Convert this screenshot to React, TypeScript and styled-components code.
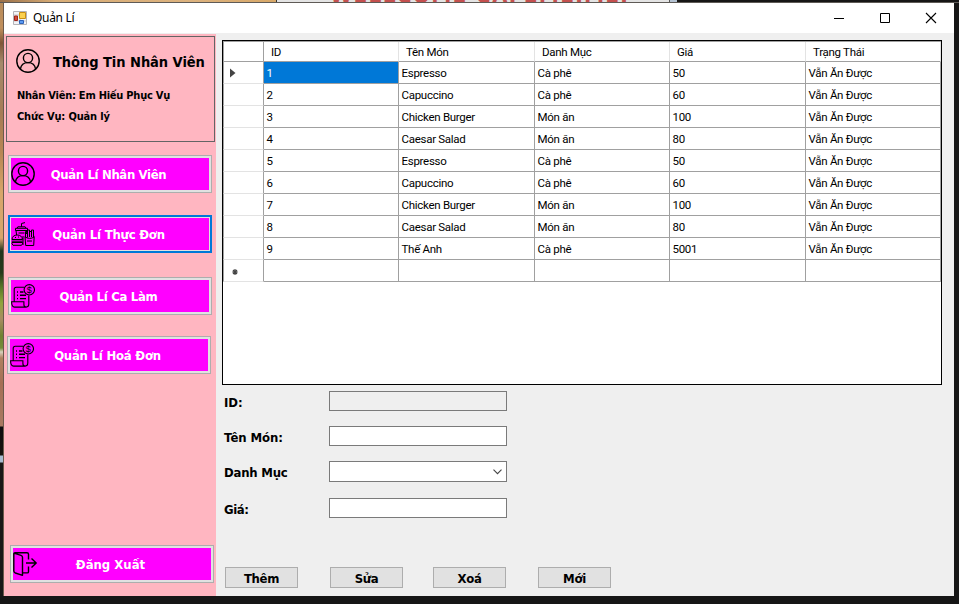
import React from 'react';
import styled, { createGlobalStyle } from 'styled-components';

const GlobalStyle = createGlobalStyle`
  *, *::before, *::after { box-sizing: border-box; }
  body { margin: 0; background: #161616; }
  button, input { font: inherit; color: inherit; margin: 0; border-radius: 0; outline: none; }
`;

const Desktop = styled.div`
  display: grid;
  grid-template: 3px 593px 8px / 4px 950px 5px;
  width: 959px;
  height: 604px;
  overflow: hidden;
  background: #161616;
  font-family: 'DejaVu Sans Condensed', 'DejaVu Sans', sans-serif;
  color: #000;
`;

const TopStrip = styled.div`
  grid-column: 1 / -1;
  display: flex;
  overflow: hidden;
  border-bottom: 1px solid #5e5a56;
`;

const Wallpaper = styled.div`
  width: 276px;
  background: linear-gradient(90deg, #9a7048, #d9ae78 20%, #dcb27e 70%, #d8a868);
`;

const BackWindow = styled.div`
  width: 393px;
  height: 3px;
  padding-left: 53px;
  border-left: 1px solid #333;
  overflow: hidden;
  background: #e4e4e4;
`;

const Welcome = styled.div`
  margin-top: -17px;
  font: bold 22.5px/24px 'DejaVu Sans Condensed', 'DejaVu Sans', sans-serif;
  letter-spacing: 1.2px;
  white-space: nowrap;
  color: #c4504e;
`;

const BackEdge = styled.div`
  width: 8px;
  border-left: 1px solid #555;
  background: #b4c2d2;
`;

const LeftStrip = styled.div`
  border-right: 1px solid #6b5a4c;
  background: linear-gradient(
    180deg,
    #b98c5b 0, #c08f5c 25px, #7f5638 40px, #a58a6b 60px, #a67c56 110px, #b98653 150px,
    #d8a66a 190px, #d9a56b 235px, #22341c 248px, #263b1c 270px, #5b7a28 285px, #90a43c 300px,
    #a98b62 316px, #6f8230 333px, #768c39 345px, #d8d0bd 349px, #b08060 355px, #a56f55 380px,
    #a87a62 423px, #0d0d0f 424px, #17130f 452px, #a8bcd0 453px, #a8bcd0 459px, #181818 460px
  );
`;

const Window = styled.main`
  display: grid;
  grid-template: 30px 563px / 212px 738px;
  background: #efefef;
`;

const TitleBar = styled.header`
  grid-column: 1 / -1;
  display: flex;
  align-items: center;
  padding-left: 9px;
  background: #fff;
`;

const WindowTitle = styled.h1`
  flex: 1;
  margin: 0 0 0 6px;
  font: 400 12px/20px 'Noto Sans', sans-serif;
  letter-spacing: -0.3px;
`;

const CaptionButton = styled.button`
  display: grid;
  place-items: center;
  width: 46px;
  height: 29px;
  padding: 0;
  border: 0;
  background: none;
`;

const Sidebar = styled.aside`
  display: flex;
  flex-direction: column;
  align-items: flex-start;
  height: 562px;
  margin-top: 1px;
  padding: 2px 0 13px 2px;
  background: #ffb6c1;
`;

const Profile = styled.section`
  width: 209px;
  height: 106px;
  padding: 12px 0 0 9px;
  border: 1px solid #646464;
`;

const ProfileHead = styled.div`
  display: flex;
  align-items: center;
  height: 24px;
  margin-bottom: 12px;
`;

const ProfileTitle = styled.h2`
  margin: 1px 0 0 13px;
  font-size: 14.5px;
  line-height: 24px;
  letter-spacing: -0.05px;
  white-space: nowrap;
`;

const ProfileLine = styled.div<{ $track: number }>`
  padding-left: 1px;
  font-size: 11px;
  font-weight: bold;
  line-height: 21px;
  letter-spacing: ${p => p.$track}px;
  white-space: nowrap;
`;

const MenuButton = styled.button<{ $top: number; $left: number; $focused?: boolean }>`
  flex: none;
  display: grid;
  grid-template-columns: 24px 1fr 27px;
  align-items: center;
  width: 204px;
  height: 38px;
  margin: ${p => p.$top}px 0 0 ${p => p.$left}px;
  padding: ${p => (p.$focused ? 1 : 2)}px;
  border: ${p => (p.$focused ? '2px solid #0078d7' : '1px solid #adadad')};
  background: linear-gradient(#f0f, #f0f) content-box, #e1e1e1;
`;

const MenuText = styled.span<{ $track: number }>`
  padding-top: 2px;
  font-size: 13px;
  font-weight: bold;
  line-height: 20px;
  letter-spacing: ${p => p.$track}px;
  text-align: center;
  white-space: nowrap;
  color: #fff;
`;

const Spacer = styled.div`
  flex: 1;
`;

const Content = styled.section`
  padding: 7px 0 0 6px;
`;

const DataGrid = styled.div`
  width: 720px;
  height: 345px;
  border: 1px solid #000;
  background: #fff;
  font: 11.5px Roboto, sans-serif;
  letter-spacing: -0.28px;
`;

const GridRow = styled.div<{ $header?: boolean }>`
  display: grid;
  grid-template-columns: 41px 135px 136px 135px 136px 135px;
  grid-template-rows: 100%;
  height: ${p => (p.$header ? 21 : 22)}px;
  border-top: ${p => (p.$header ? '1px solid #a0a0a0' : '0')};
`;

const RowHeader = styled.div<{ $header?: boolean }>`
  display: flex;
  align-items: center;
  padding-left: 6px;
  border: solid #a0a0a0;
  border-width: 0 1px 1px;
  border-bottom-color: ${p => (p.$header ? '#a0a0a0' : '#e3e3e3')};
`;

const HeaderCell = styled.div`
  padding-left: 7px;
  border-right: 1px solid #e3e3e3;
  border-bottom: 1px solid #a0a0a0;
  line-height: 20px;
`;

const Cell = styled.div<{ $selected?: boolean }>`
  padding-left: 2.5px;
  border-right: 1px solid #a0a0a0;
  border-bottom: 1px solid #a0a0a0;
  line-height: 22px;
  background: ${p => (p.$selected ? '#0078d7' : '#fff')};
  color: ${p => (p.$selected ? '#fff' : '#000')};
`;

const Form = styled.form`
  padding: 6px 0 0 2px;
`;

const Field = styled.label<{ $gap: number }>`
  display: grid;
  grid-template-columns: 105px 178px;
  margin-bottom: ${p => p.$gap}px;
`;

const FieldLabel = styled.span<{ $track?: number }>`
  height: 20px;
  padding-top: 2px;
  font-size: 13px;
  font-weight: bold;
  line-height: 20px;
  letter-spacing: ${p => p.$track ?? 0}px;
`;

const TextBox = styled.input`
  width: 178px;
  height: 20px;
  padding: 0 4px;
  border: 1px solid #7a7a7a;
  background: #fff;
  &:disabled { background: #efefef; }
`;

const ComboBox = styled.span`
  display: flex;
  justify-content: flex-end;
  align-items: center;
  height: 21px;
  padding-right: 4px;
  border: 1px solid #7a7a7a;
  background: #fff;
`;

const Actions = styled.div`
  display: grid;
  grid-template-columns: 105px 103px 105px 73px;
  padding: 49px 0 0 1px;
`;

const ActionButton = styled.button`
  width: 73px;
  height: 21px;
  padding: 2px 0 0;
  border: 1px solid #adadad;
  background: #e1e1e1;
  font-size: 13px;
  font-weight: bold;
  line-height: 17px;
  letter-spacing: -0.3px;
  text-align: center;
`;

const Icon = styled.svg`
  display: block;
  flex: none;
  fill: none;
  stroke: #000;
`;

const UserIcon = () => (
  <Icon width="24" height="24" viewBox="0 0 24 24" strokeWidth="1.4">
    <circle cx="12" cy="12" r="11.2" />
    <circle cx="12" cy="9" r="4.6" />
    <path d="M4.400 20.200C5 15.800 8 13.600 12 13.600s7 2.200 7.600 6.600" />
  </Icon>
);

const FoodIcon = () => (
  <Icon width="24" height="24" viewBox="0 0 24 24" strokeWidth="1">
    <path d="M4.500 8.500V6.300h12v2.200M6 6.300l.8-1.500h7.400l.8 1.500M10.500 4.800V1.500L14 .6M4.500 8.500h12M5 8.500l.6 4.500M16 8.500l-.6 3.500M7.500 11h6" />
    <path d="M1 17.500c0-3 2.300-4.500 5.200-4.500s5.200 1.500 5.200 4.500zM.8 19.200h10.800M1 20.500h10.500v1.300l-1 1.500H2l-1-1.500zM4 15.500h1M7 15h1" />
    <path d="M14.500 15.500v-6h2v6M16.500 15V8h2v7M18.500 15V9.500h2V15M20.500 15V8h2v7.500M14 14.500l.7 9h8l.5-9c-2 2.500-7 2.500-9.200 0zM16 19h5M12 14v9" />
  </Icon>
);

const ReceiptIcon = () => (
  <Icon width="24" height="24" viewBox="0 0 24 24" strokeWidth="1.1">
    <path d="M13 3.200H5.200c-1.300 0-2 .9-2 2.200v12M3.200 5.500v12.200M17.800 11.500v8.300c0 2-1 3.300-2.700 3.300H3.600C1.600 23.100.6 21.500.6 17.700h12.300v2.800c0 1.600.8 2.600 2.200 2.600" />
    <circle cx="18.300" cy="5.800" r="5.200" />
    <path d="M6 8h1M9 8h3.500M6 11.300h1M9 11.300h6M6 14.600h1M9 14.600h6" strokeWidth="1.400" />
    <text x="18.300" y="9" textAnchor="middle" fontFamily="Liberation Sans" fontSize="9" fill="#000" stroke="none">$</text>
  </Icon>
);

const ExitIcon = () => (
  <Icon width="24" height="24" viewBox="0 0 24 24" strokeWidth="1.400" strokeLinejoin="round">
    <path d="M.9 1.200 8 3.300c1 .3 1.500 1 1.500 2v18L2.400 21C1.300 20.600.8 20 .8 19V1.800C.8 1 1.300.7 2 .7h12c1 0 1.500.6 1.500 1.500v5.300M15.500 14.500v5.200c0 .8-.5 1.200-1.200 1.200H9.500M13 11h10.200M18.500 6.500l4.700 4.500-4.700 4.500" />
  </Icon>
);

const AppIcon = () => (
  <Icon width="14" height="14" viewBox="0 0 14 14">
    <path d="M.5.5h13v13H.5z" fill="#f3f3f6" stroke="#b3b3b8" />
    <path d="M7 1v12M1 10h12M1 4h6" stroke="#c6c6cc" />
    <path d="M1.500 5h3v4.500h-3z" fill="#d44a3a" stroke="#9f2418" />
    <path d="M6.500 1.500h6v6h-6z" fill="#fbd04e" stroke="#c98e12" />
    <path d="M6.500 9.500h4v3h-4z" fill="#5a9af2" stroke="#2e62b8" />
  </Icon>
);

const rows = [
  ['1', 'Espresso', 'Cà phê', '50', 'Vẫn Ăn Được'],
  ['2', 'Capuccino', 'Cà phê', '60', 'Vẫn Ăn Được'],
  ['3', 'Chicken Burger', 'Món ăn', '100', 'Vẫn Ăn Được'],
  ['4', 'Caesar Salad', 'Món ăn', '80', 'Vẫn Ăn Được'],
  ['5', 'Espresso', 'Cà phê', '50', 'Vẫn Ăn Được'],
  ['6', 'Capuccino', 'Cà phê', '60', 'Vẫn Ăn Được'],
  ['7', 'Chicken Burger', 'Món ăn', '100', 'Vẫn Ăn Được'],
  ['8', 'Caesar Salad', 'Món ăn', '80', 'Vẫn Ăn Được'],
  ['9', 'Thế Anh', 'Cà phê', '5001', 'Vẫn Ăn Được'],
  ['', '', '', '', ''],
];

const RowMarker = ({ index }: { index: number }) => {
  if (index === 0) {
    return (
      <Icon width="12" height="12" viewBox="0 0 12 12">
        <path d="M0 1.500v9L5.500 6z" fill="#444" stroke="none" />
      </Icon>
    );
  }
  if (index === rows.length - 1) {
    return (
      <Icon width="12" height="12" viewBox="0 0 12 12" strokeWidth="1.200">
        <path d="M5 4v6M2.200 7h5.600M3 5l4 4M7 5L3 9" stroke="#444" />
      </Icon>
    );
  }
  return null;
};

export default function App() {
  return (
    <Desktop>
      <GlobalStyle />
      <TopStrip>
        <Wallpaper />
        <BackWindow><Welcome>WELLCOME CAFEMEIMEI</Welcome></BackWindow>
        <BackEdge />
      </TopStrip>
      <LeftStrip />
      <Window>
        <TitleBar>
          <AppIcon />
          <WindowTitle>Quản Lí</WindowTitle>
          <CaptionButton aria-label="Minimize">
            <Icon width="12" height="12"><path d="M1 6.500h10" /></Icon>
          </CaptionButton>
          <CaptionButton aria-label="Maximize">
            <Icon width="12" height="12"><path d="M1.500 1.500h9v9h-9z" /></Icon>
          </CaptionButton>
          <CaptionButton aria-label="Close">
            <Icon width="12" height="12"><path d="M1 1l10 10M11 1L1 11" strokeWidth="1.100" /></Icon>
          </CaptionButton>
        </TitleBar>
        <Sidebar>
          <Profile>
            <ProfileHead>
              <UserIcon />
              <ProfileTitle>Thông Tin Nhân Viên</ProfileTitle>
            </ProfileHead>
            <ProfileLine $track={-0.24}>Nhân Viên: Em Hiếu Phục Vụ</ProfileLine>
            <ProfileLine $track={-0.15}>Chức Vụ: Quản lý</ProfileLine>
          </Profile>
          <MenuButton $top={13} $left={2}>
            <UserIcon /><MenuText $track={-0.35}>Quản Lí Nhân Viên</MenuText>
          </MenuButton>
          <MenuButton $top={22} $left={2} $focused>
            <FoodIcon /><MenuText $track={-0.2}>Quản Lí Thực Đơn</MenuText>
          </MenuButton>
          <MenuButton $top={24} $left={2}>
            <ReceiptIcon /><MenuText $track={-0.3}>Quản Lí Ca Làm</MenuText>
          </MenuButton>
          <MenuButton $top={21} $left={1}>
            <ReceiptIcon /><MenuText $track={-0.22}>Quản Lí Hoá Đơn</MenuText>
          </MenuButton>
          <Spacer />
          <MenuButton $top={0} $left={4}>
            <ExitIcon /><MenuText $track={0}>Đăng Xuất</MenuText>
          </MenuButton>
        </Sidebar>
        <Content>
          <DataGrid>
            <GridRow $header>
              <RowHeader $header />
              {['ID', 'Tên Món', 'Danh Mục', 'Giá', 'Trạng Thái'].map(h => (
                <HeaderCell key={h}>{h}</HeaderCell>
              ))}
            </GridRow>
            {rows.map((row, r) => (
              <GridRow key={r}>
                <RowHeader><RowMarker index={r} /></RowHeader>
                {row.map((value, c) => (
                  <Cell key={c} $selected={r === 0 && c === 0}>{value}</Cell>
                ))}
              </GridRow>
            ))}
          </DataGrid>
          <Form onSubmit={e => e.preventDefault()}>
            <Field $gap={15}><FieldLabel>ID:</FieldLabel><TextBox disabled /></Field>
            <Field $gap={15}><FieldLabel $track={-0.1}>Tên Món:</FieldLabel><TextBox /></Field>
            <Field $gap={16}>
              <FieldLabel $track={-0.22}>Danh Mục</FieldLabel>
              <ComboBox>
                <Icon width="9" height="6"><path d="M.5.7l4 4 4-4" stroke="#444" strokeWidth="1.100" /></Icon>
              </ComboBox>
            </Field>
            <Field $gap={0}><FieldLabel $track={-0.45}>Giá:</FieldLabel><TextBox /></Field>
            <Actions>
              <ActionButton>Thêm</ActionButton>
              <ActionButton>Sửa</ActionButton>
              <ActionButton>Xoá</ActionButton>
              <ActionButton>Mới</ActionButton>
            </Actions>
          </Form>
        </Content>
      </Window>
    </Desktop>
  );
}
